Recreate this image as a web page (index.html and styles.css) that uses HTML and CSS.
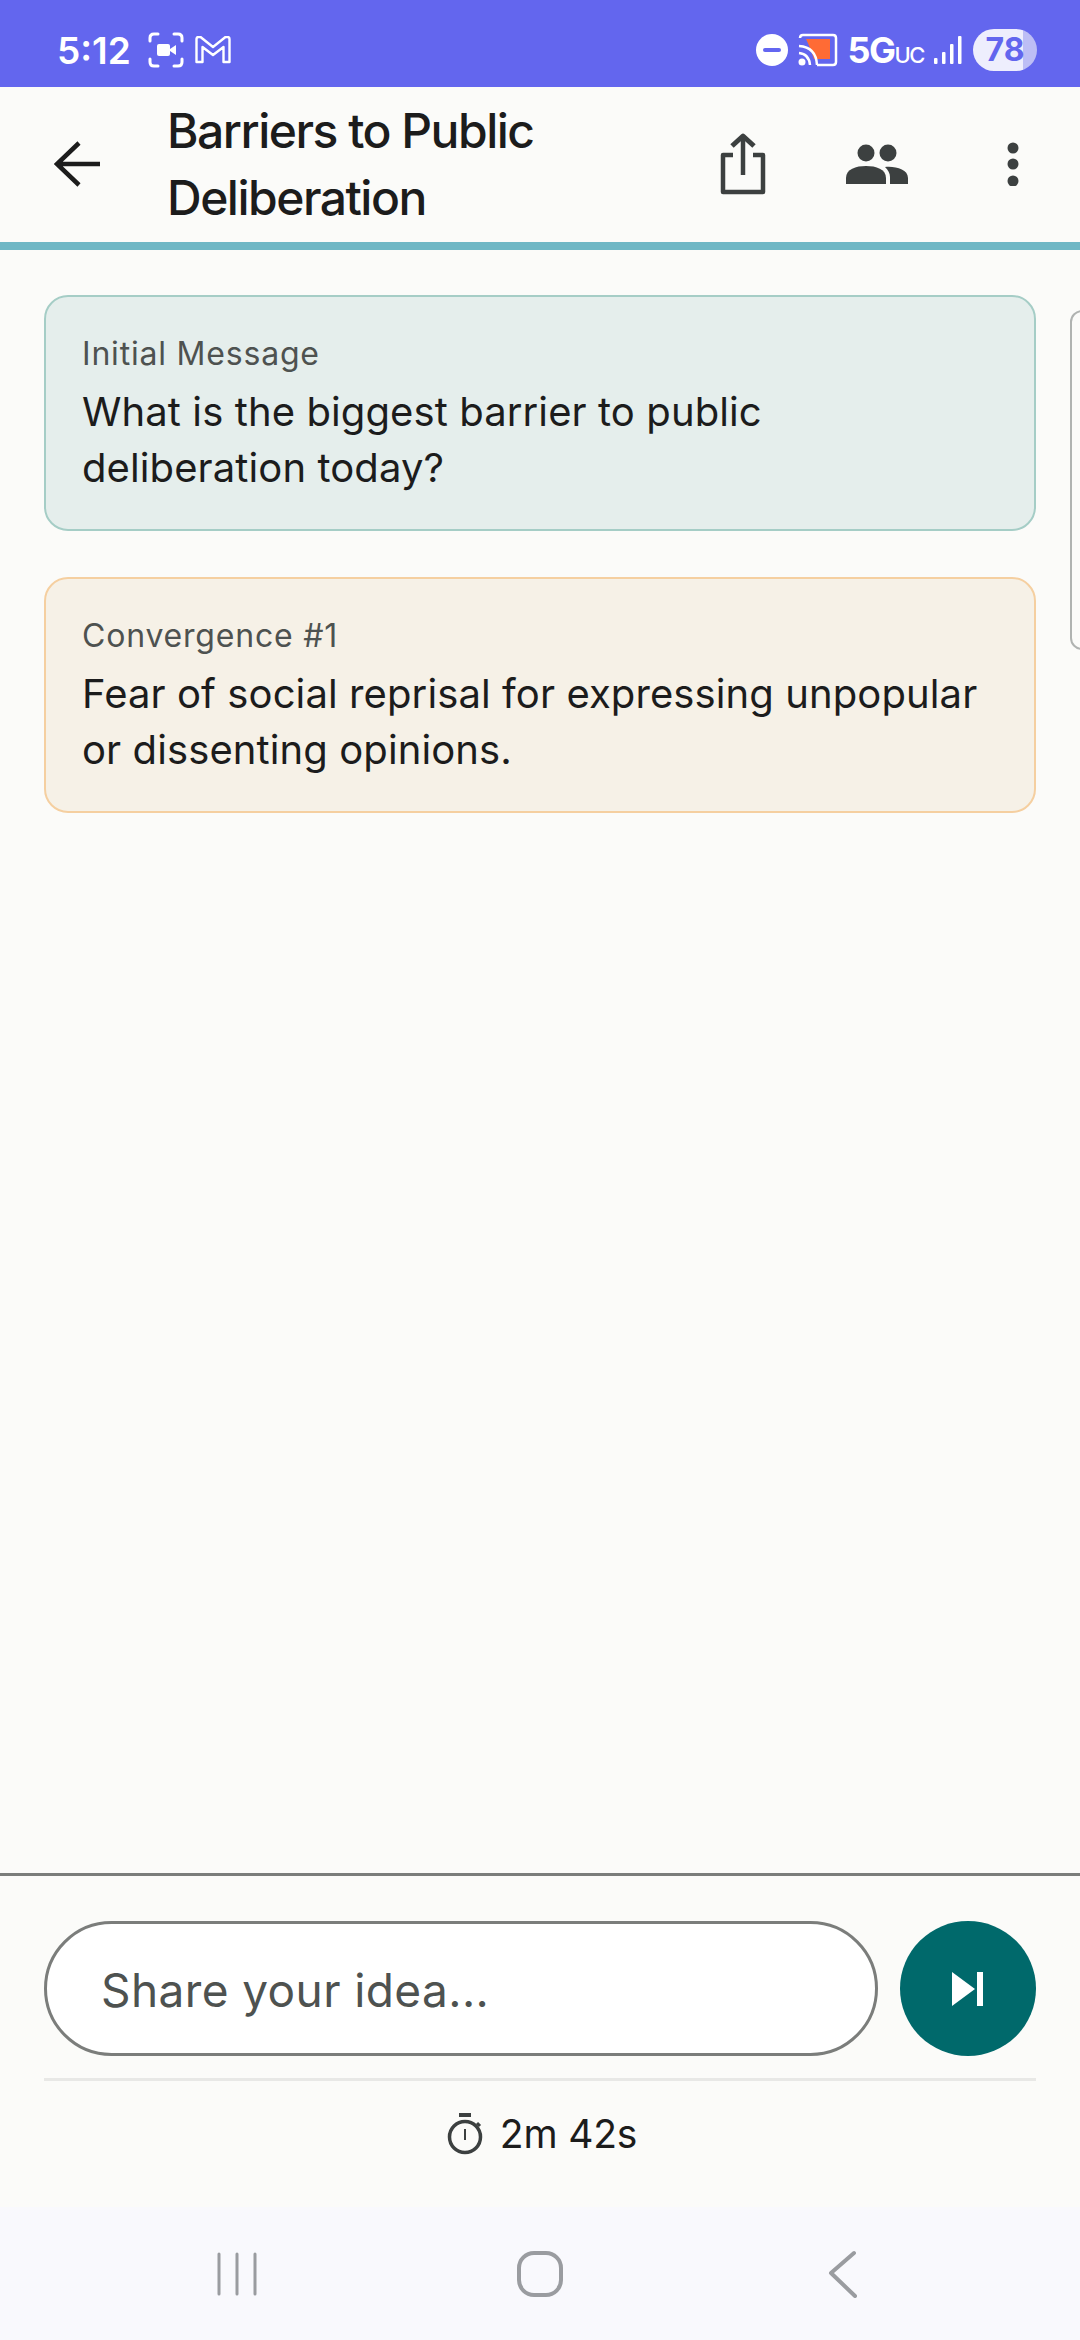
FILE: index.html
```html
<!DOCTYPE html>
<html lang="en">
<head>
    <meta charset="UTF-8">
    <meta name="viewport" content="width=device-width, initial-scale=1.0">
    <title>Barriers to Public Deliberation</title>
    <link rel="stylesheet" href="styles.css">
</head>
<body>
    <div class="status-bar">
        <div class="status-left">
            <span class="clock">5:12</span>
            <svg class="status-icon" width="36" height="36" viewBox="0 0 36 36" fill="none" stroke="#fff" stroke-width="3" stroke-linecap="round">
                <path d="M2 9V6q0-4 4-4h4M26 2h4q4 0 4 4v3M34 27v3q0 4-4 4h-4M10 34H6q-4 0-4-4v-3"/>
                <rect x="9" y="12" width="13" height="12" rx="2" fill="#fff" stroke="none"/>
                <path d="M22 17l6-4v10l-6-4z" fill="#fff" stroke="none"/>
            </svg>
            <svg class="status-icon" width="36" height="28" viewBox="0 0 36 28" fill="none" stroke="#fff" stroke-width="2.4" stroke-linejoin="round">
                <path d="M1.500 3q0-2 2-2h2l12.500 10 12.500-10h2q2 0 2 2v23h-6V11l-10.500 8-10.500-8v15h-6z"/>
            </svg>
        </div>
        <div class="status-right">
            <svg width="32" height="32" viewBox="0 0 32 32"><circle cx="16" cy="16" r="16" fill="#fff"/><rect x="7" y="14" width="18" height="4" rx="2" fill="#6366f1"/></svg>
            <svg width="40" height="34" viewBox="0 0 40 34" fill="none">
                <path d="M8 6h24v20H16q-4-12-8-20z" fill="#ff6b35"/>
                <path d="M2 5q0-3 3-3h30q3 0 3 3v24q0 3-3 3H19" stroke="#fff" stroke-width="2.500"/>
                <path d="M1 13q17 1 18 19M1 20q10 1 11 12" stroke="#fff" stroke-width="2.500"/>
                <circle cx="4" cy="29" r="3.500" fill="#fff"/>
            </svg>
            <span class="net">5G<small>UC</small></span>
            <svg class="signal" width="28" height="30" viewBox="0 0 28 30" fill="#fff">
                <rect x="0" y="23" width="3.500" height="6" rx="1"/><rect x="8" y="17" width="3.500" height="12" rx="1"/><rect x="16" y="9" width="3.500" height="20" rx="1"/><rect x="24" y="1" width="3.500" height="28" rx="1"/>
            </svg>
            <span class="battery">78</span>
        </div>
    </div>

    <header class="app-bar">
        <svg class="back" width="46" height="46" viewBox="0 0 46 46" fill="none" stroke="#1c1c1c" stroke-width="4.500">
            <path d="M46 23H3M25 2L3 23l22 21"/>
        </svg>
        <h1>Barriers to Public<br>Deliberation</h1>
        <svg class="action share" width="46" height="62" viewBox="0 0 46 62" fill="none" stroke="#3c4040" stroke-width="4.500" stroke-linejoin="round">
            <path d="M13 22H3v37h40V22H33"/>
            <path d="M23 42V5"/>
            <path d="M12 13L23 3l11 10" stroke-width="5"/>
        </svg>
        <svg class="action people" width="62" height="40" viewBox="0 0 62 40" fill="#3c4040">
            <circle cx="20" cy="9" r="8.500"/><circle cx="42" cy="9" r="8.500"/>
            <path d="M0 40v-6c0-9 10-12 20-12s20 3 20 12v6z"/>
            <path d="M44 40v-7c0-4-2-7-5-10 10-1 23 2 23 11v6z"/>
        </svg>
        <svg class="action dots" width="12" height="44" viewBox="0 0 12 44" fill="#3c4040">
            <circle cx="6" cy="6" r="5.500"/><circle cx="6" cy="22" r="5.500"/><circle cx="6" cy="39" r="5.500"/>
        </svg>
    </header>

    <main class="feed">
        <div class="side-card"></div>
        <section class="card card-initial">
            <div class="card-label">Initial Message</div>
            <p>What is the biggest barrier to public deliberation today?</p>
        </section>
        <section class="card card-convergence">
            <div class="card-label">Convergence #1</div>
            <p>Fear of social reprisal for expressing unpopular or dissenting opinions.</p>
        </section>
    </main>

    <footer class="composer">
        <div class="composer-row">
            <div class="idea-input">Share your idea...</div>
            <button class="send-btn">
                <svg width="32" height="34" viewBox="0 0 32 34" fill="#fff"><path d="M0 0l23 17L0 34z"/><rect x="25" y="0" width="6" height="34"/></svg>
            </button>
        </div>
        <div class="timer">
            <svg width="36" height="42" viewBox="0 0 36 42" fill="none" stroke="#3c4040">
                <circle cx="18" cy="24" r="15.500" stroke-width="3.500"/>
                <path d="M18 16v11" stroke-width="2"/>
                <path d="M12 2h12" stroke-width="4"/>
                <path d="M30 10l3 3" stroke-width="3"/>
            </svg>
            <span>2m 42s</span>
        </div>
    </footer>

    <nav class="nav-bar">
        <svg width="42" height="44" viewBox="0 0 42 44" fill="none" stroke="#9a9ca0" stroke-width="3" stroke-linecap="round">
            <path d="M3 2v40M21 2v40M39 2v40"/>
        </svg>
        <svg class="nav-home" width="46" height="46" viewBox="0 0 46 46" fill="none" stroke="#9a9ca0" stroke-width="4">
            <rect x="2" y="2" width="42" height="42" rx="15"/>
        </svg>
        <svg width="30" height="48" viewBox="0 0 30 48" fill="none" stroke="#9a9ca0" stroke-width="4" stroke-linecap="round" stroke-linejoin="round">
            <path d="M26 3L3 23l24 23"/>
        </svg>
    </nav>
</body>
</html>
```

FILE: styles.css
```css
:root {
    --page-bg: #fbfbf9;
    --dark-text: #1c1c1c;
    --muted-text: #4e5250;
}

* {
    box-sizing: border-box;
}

body {
    margin: 0;
    width: 1080px;
    height: 2340px;
    display: flex;
    flex-direction: column;
    background: var(--page-bg);
    color: var(--dark-text);
    font-family: Inter, 'Noto Sans', sans-serif;
    overflow: hidden;
}

.status-bar {
    height: 87px;
    flex: none;
    display: flex;
    justify-content: space-between;
    align-items: center;
    padding: 13px 43px 0 57px;
    background: #6366ee;
    color: #fff;
}

.status-left,
.status-right {
    display: flex;
    align-items: center;
}

.status-left {
    gap: 11px;
}

.status-right {
    gap: 10px;
}

.clock {
    font-size: 37px;
    font-weight: 600;
    margin-right: 6px;
}

.net {
    font-size: 36px;
    font-weight: 700;
    letter-spacing: -1.5px;
}

.net small {
    font-size: 22px;
    font-weight: 500;
}

.battery {
    width: 64px;
    height: 42px;
    margin-left: 1px;
    border-radius: 21px;
    background: linear-gradient(90deg, #eeeefd 78%, #bdbef5 78%);
    color: #6366ee;
    font-size: 32px;
    font-weight: 700;
    line-height: 42px;
    text-align: center;
}

.app-bar {
    height: 163px;
    flex: none;
    display: flex;
    align-items: center;
    padding: 0 0 2px 54px;
    border-bottom: 8px solid #6fb7c5;
}

.back {
    flex: none;
}

.app-bar h1 {
    width: 553px;
    flex: none;
    margin: 0 0 0 67px;
    font-size: 48px;
    font-weight: 500;
    line-height: 67px;
    letter-spacing: -1.5px;
}

.action {
    flex: none;
}

.people {
    margin-left: 80px;
}

.dots {
    margin-left: 99px;
}

.feed {
    position: relative;
    flex: 1;
    display: flex;
    flex-direction: column;
    gap: 46px;
    padding: 45px 44px 0;
}

.side-card {
    position: absolute;
    left: 1070px;
    top: 60px;
    width: 40px;
    height: 340px;
    border: 2px solid #b0b3b1;
    border-radius: 12px;
}

.card {
    height: 236px;
    padding: 37px 36px 0;
    border: 2px solid;
    border-radius: 24px;
}

.card-initial {
    background: #e5eeec;
    border-color: #a5cdc6;
}

.card-convergence {
    background: #f6f1e7;
    border-color: #f5cfa0;
}

.card-label {
    color: var(--muted-text);
    font-size: 32px;
    line-height: 40px;
    letter-spacing: 0.8px;
}

.card p {
    max-width: 902px;
    margin: 10px 0 0;
    font-size: 40px;
    line-height: 56px;
    letter-spacing: 0.1px;
}

.composer {
    height: 334px;
    flex: none;
    padding: 45px 44px 0;
    border-top: 3px solid #7b7d7b;
}

.composer-row {
    display: flex;
    gap: 22px;
    padding-bottom: 22px;
    border-bottom: 3px solid #e8e8e6;
}

.idea-input {
    flex: 1;
    height: 135px;
    padding-left: 54px;
    border: 3px solid #7b7d7b;
    border-radius: 68px;
    background: #fff;
    color: var(--muted-text);
    font-size: 46px;
    line-height: 133px;
    letter-spacing: 0.4px;
}

.send-btn {
    width: 136px;
    height: 135px;
    padding: 0;
    border: none;
    border-radius: 50%;
    background: #00696b;
    display: flex;
    justify-content: center;
    align-items: center;
}

.timer {
    display: flex;
    justify-content: center;
    align-items: center;
    gap: 17px;
    margin-top: 30px;
    padding-left: 4px;
    font-size: 39px;
    line-height: 46px;
    letter-spacing: -0.2px;
}

.nav-bar {
    height: 133px;
    flex: none;
    display: flex;
    justify-content: space-between;
    align-items: center;
    padding: 0 222px 0 216px;
    background: #f9f9fd;
}

.nav-home {
    margin-right: 6px;
}
```
